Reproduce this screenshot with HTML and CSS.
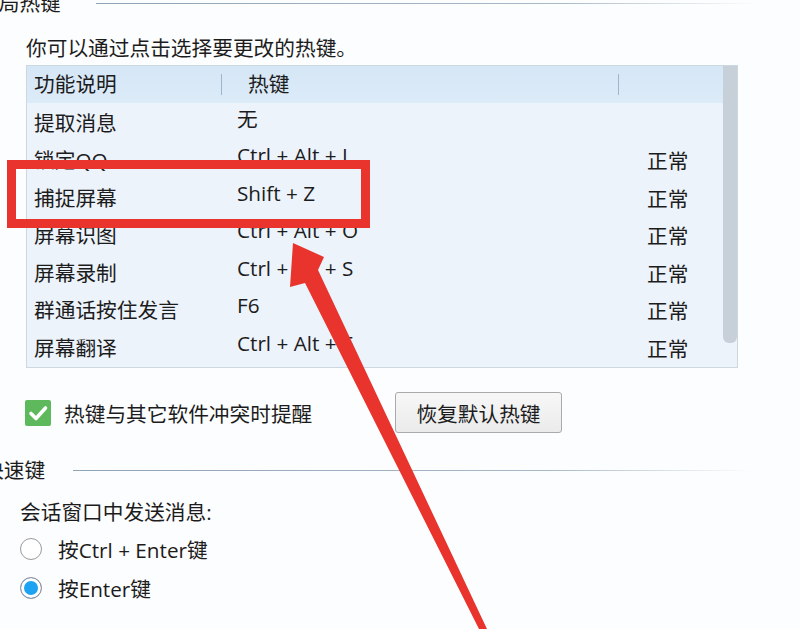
FILE: index.html
```html
<!DOCTYPE html>
<html lang="zh-CN">
<head>
  <meta charset="UTF-8" />
  <title>热键设置</title>
  <meta name="viewport" content="width=device-width, initial-scale=1" />
  <link rel="stylesheet" href="styles.css">
</head>
<body>
  <section class="group group-global">
    <div class="legend legend-global">
      <span class="legend-text">全局热键</span>
      <i class="legend-rule"></i>
    </div>
    <p class="hint">你可以通过点击选择要更改的热键。</p>

    <div class="hotkeys">
      <div class="hk-list">
        <div class="hk-head">
          <div class="hh c1">功能说明</div>
          <i class="hh-sep"></i>
          <div class="hh c2">热键</div>
          <i class="hh-sep"></i>
          <div class="hh c3"></div>
        </div>
        <div class="hk-row"><span class="c1">提取消息</span><span class="c2">无</span><span class="c3"></span></div>
        <div class="hk-row"><span class="c1">锁定QQ</span><span class="c2">Ctrl + Alt + L</span><span class="c3">正常</span></div>
        <div class="hk-row"><span class="c1">捕捉屏幕</span><span class="c2">Shift + Z</span><span class="c3">正常</span></div>
        <div class="hk-row"><span class="c1">屏幕识图</span><span class="c2">Ctrl + Alt + O</span><span class="c3">正常</span></div>
        <div class="hk-row"><span class="c1">屏幕录制</span><span class="c2">Ctrl + Alt + S</span><span class="c3">正常</span></div>
        <div class="hk-row"><span class="c1">群通话按住发言</span><span class="c2">F6</span><span class="c3">正常</span></div>
        <div class="hk-row"><span class="c1">屏幕翻译</span><span class="c2">Ctrl + Alt + F</span><span class="c3">正常</span></div>
      </div>
      <div class="hk-scroll"><div class="hk-thumb"></div></div>
    </div>

    <div class="options-row">
      <label class="check">
        <span class="check-box">
          <svg width="26" height="26" viewBox="0 0 26 26"><path d="M6 13.5 L11 18.5 L20.5 8" fill="none" stroke="#fff" stroke-width="3.6" stroke-linecap="round" stroke-linejoin="round"/></svg>
        </span>
        热键与其它软件冲突时提醒
      </label>
      <button class="btn-reset" type="button">恢复默认热键</button>
    </div>
  </section>

  <section class="group group-quick">
    <div class="legend legend-quick">
      <span class="legend-text">快速键</span>
      <i class="legend-rule"></i>
    </div>
    <p class="send-label">会话窗口中发送消息:</p>
    <label class="radio"><span class="radio-dot"></span>按Ctrl + Enter键</label>
    <label class="radio"><span class="radio-dot checked"></span>按Enter键</label>
  </section>

  <!-- red annotation drawn over the screenshot -->
  <svg class="annotation" width="800" height="629" viewBox="0 0 800 629">
    <rect x="11.5" y="164.5" width="354" height="59" fill="none" stroke="#e8342c" stroke-width="9"/>
    <polygon points="293,243 324,257 318,270 487,629 479,629 305,283 290,287" fill="#e8342c"/>
  </svg>
</body>
</html>
```

FILE: styles.css
```css
body {
  margin: 0;
  width: 800px;
  height: 629px;
  overflow: hidden;
  background: #fcfdfe;
  font-family: "Open Sans", "Noto Sans CJK SC", sans-serif;
  font-size: 20.7px;
  color: #1c1c1c;
  position: relative;
}
p { margin: 0; }

.group-global { padding-left: 26px; }
.group-quick { padding-left: 20px; }

.legend {
  display: flex;
  align-items: center;
  height: 26px;
  line-height: 26px;
  white-space: nowrap;
}
.legend-rule {
  display: block;
  height: 1px;
  background: linear-gradient(90deg, #8fa3b6 0%, #a9b9c8 70%, rgba(200,210,220,0) 100%);
}
.legend-global {
  margin-top: -10px;
  margin-left: -48px;
}
.legend-global .legend-rule { margin-left: 35px; width: 660px; }
.legend-quick {
  margin-top: 24px;
  margin-left: -37px;
}
.legend-quick .legend-rule { margin-left: 28px; width: 680px; }

.hint {
  margin-top: 17px;
  line-height: 30px;
}

.hotkeys {
  margin-top: 2px;
  width: 712px;
  height: 303px;
  box-sizing: border-box;
  border: 1px solid #cdd7e0;
  background: #edf3fb;
  display: flex;
}
.hk-list { flex: 1; }
.hk-scroll { width: 14px; }
.hk-thumb {
  height: 277px;
  background: #c7d0d9;
  border-radius: 0 0 6px 6px;
}

.hk-head {
  display: flex;
  align-items: center;
  height: 37px;
  background: linear-gradient(180deg, #d5e6f6 0%, #dcebf8 100%);
}
.hh { line-height: 37px; }
.hh.c1 { width: 187px; padding-left: 7px; }
.hh.c2 { width: 370px; padding-left: 26px; }
.hh.c3 { flex: 1; }
.hh-sep {
  display: block;
  width: 1px;
  height: 21px;
  background: #9db6cd;
}

.hk-row {
  display: flex;
  align-items: center;
  height: 37.5px;
}
.hk-row .c1 { width: 203px; padding-left: 7px; }
.hk-row .c2 { width: 410px; padding-bottom: 8px; }
.hk-row .c3 { flex: 1; padding-top: 2px; }

.options-row {
  margin-top: 24px;
  height: 41px;
  display: flex;
  align-items: center;
}
.check {
  display: flex;
  align-items: center;
  gap: 13px;
  margin-left: -1px;
  width: 301px;
}
.check-box {
  width: 26px;
  height: 26px;
  border-radius: 2px;
  background: #5db95b;
  display: block;
}
.check-box svg { display: block; }
.btn-reset {
  margin-left: 69px;
  width: 167px;
  height: 41px;
  border: 1px solid #aaaaaa;
  border-radius: 3px;
  background: linear-gradient(180deg, #f7f7f7 0%, #ebebeb 100%);
  font-family: inherit;
  font-size: 20.7px;
  color: #1c1c1c;
  padding: 0;
}

.send-label {
  margin-top: 14px;
  line-height: 30px;
}
.radio {
  display: flex;
  align-items: center;
  gap: 16px;
  height: 39px;
}
.radio:first-of-type { margin-top: 2px; }
.radio-dot {
  width: 20px;
  height: 20px;
  border: 1px solid #9a9a9a;
  border-radius: 50%;
  background: #fff;
  display: block;
}
.radio-dot.checked {
  background: #1ea3f3;
  box-shadow: inset 0 0 0 3px #fff;
  border-color: #a58f95;
}

.annotation {
  position: absolute;
  left: 0;
  top: 0;
  pointer-events: none;
}
```
